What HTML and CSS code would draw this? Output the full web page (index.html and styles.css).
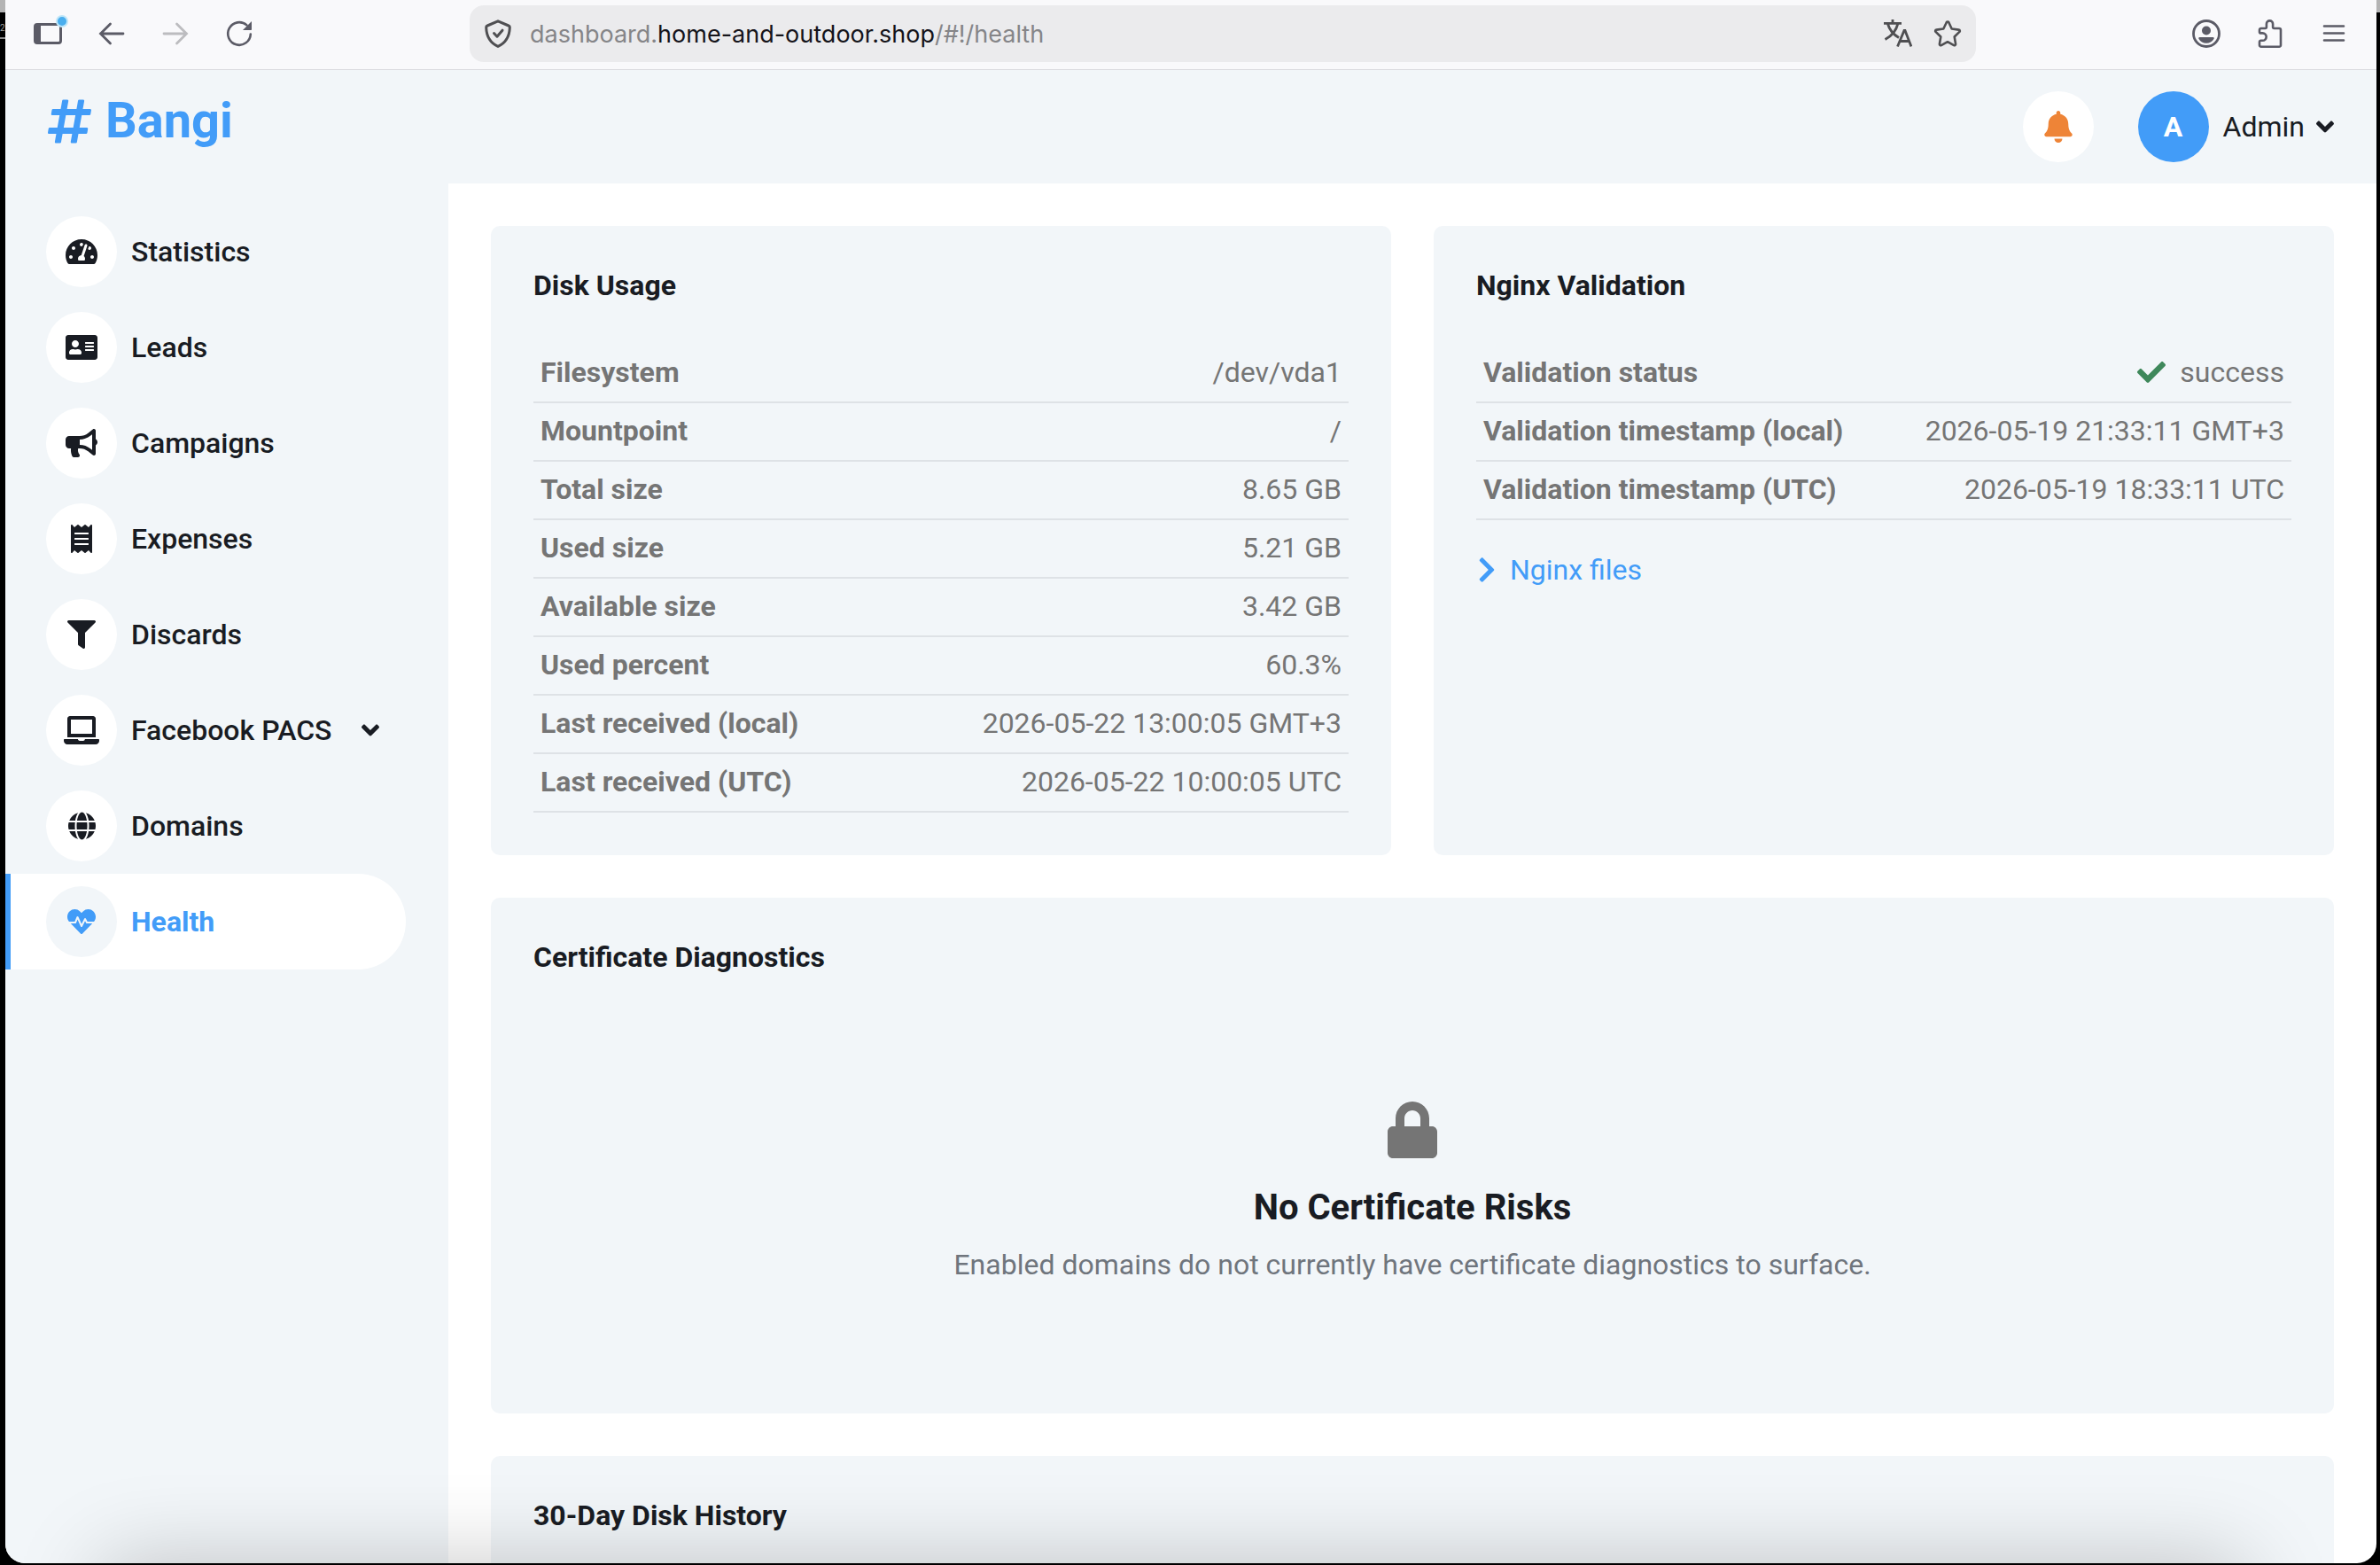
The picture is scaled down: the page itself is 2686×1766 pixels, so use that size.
FILE: index.html
```html
<!DOCTYPE html>
<html lang="en">
<head>
<meta charset="utf-8">
<meta name="viewport" content="width=device-width, initial-scale=1">
<title>Bangi – Health</title>
<link rel="stylesheet" href="styles.css">
</head>
<body>
<div class="desktop">
  <div class="edge"><span class="edge-text" aria-hidden="true">2</span></div>
  <div class="window">
    <div class="toolbar">
      <div class="tools">
        <button class="tool" type="button" aria-label="Sidebar">
          <svg viewBox="0 0 32 32" width="32" height="32"><rect x="1.500" y="5.500" width="29" height="21" rx="2.500" fill="none" stroke="currentColor" stroke-width="3"/><path d="M2 5h6v22H2z" fill="currentColor"/></svg>
          <span class="dot"></span>
        </button>
        <button class="tool" type="button" aria-label="Back">
          <svg viewBox="0 0 32 32" width="32" height="32" fill="none" stroke="currentColor" stroke-width="2.800" stroke-linecap="round"><path d="M14.500 5L3.500 16l11 11M3.500 16H29"/></svg>
        </button>
        <button class="tool tool-off" type="button" aria-label="Forward" disabled>
          <svg viewBox="0 0 32 32" width="32" height="32" fill="none" stroke="currentColor" stroke-width="2.800" stroke-linecap="round"><path d="M17.500 5l11 11-11 11M28.500 16H3"/></svg>
        </button>
        <button class="tool" type="button" aria-label="Reload">
          <svg viewBox="0 0 32 32" width="32" height="32"><path d="M28.800 16.500A12.800 12.800 0 1 1 24.500 6.400" fill="none" stroke="currentColor" stroke-width="2.600" stroke-linecap="round"/><path d="M30 2v9.200a.8.8 0 0 1-.8.8H20z" fill="currentColor"/></svg>
        </button>
      </div>
      <div class="address">
        <svg viewBox="0 0 32 32" width="32" height="32" fill="none" stroke="currentColor" stroke-width="3" stroke-linejoin="round" stroke-linecap="round"><path d="M16 1.800L28 7a2 2 0 0 1 1.300 2C29 19 24.500 26.500 16 30.400 7.500 26.500 3 19 2.700 9A2 2 0 0 1 4 7z"/><path d="M11.500 15.500l3.500 3.700 6-7"/></svg>
        <div class="url" role="textbox" aria-label="Address">dashboard.<span class="host">home-and-outdoor.shop</span>/#!/health</div>
        <button class="tool" type="button" aria-label="Translate">
          <svg viewBox="0 0 32 32" width="32" height="32" fill="none" stroke="currentColor" stroke-width="2.800"><path d="M0 4.400h20M10 0v4.400M16 4.400C14 12.500 8.500 19 1.500 22.500M4.500 5c2 7 6.500 12 12.500 15.500"/><path d="M15.500 30.500L23 12.500h1L31 30.500M18.500 24.500h10"/></svg>
        </button>
        <button class="tool" type="button" aria-label="Bookmark">
          <svg viewBox="0 0 32 32" width="32" height="32" fill="none" stroke="currentColor" stroke-width="2.600" stroke-linejoin="round"><path d="M14.800 3.200a1.400 1.400 0 0 1 2.500 0l3.400 7.300 8 1.100a1.300 1.300 0 0 1 .7 2.300l-5.700 5.600 1.400 8.200a1.400 1.400 0 0 1-2 1.400L16 25.200l-7.100 3.900a1.400 1.400 0 0 1-2-1.400l1.400-8.200-5.700-5.600a1.300 1.300 0 0 1 .7-2.300l8-1.100z"/></svg>
        </button>
      </div>
      <div class="tools">
        <button class="tool" type="button" aria-label="Account">
          <svg viewBox="0 0 32 32" width="32" height="32"><circle cx="16" cy="16" r="14.500" fill="none" stroke="currentColor" stroke-width="2.800"/><circle cx="16" cy="12.500" r="5" fill="currentColor"/><path d="M8.500 20h15a1.200 1.200 0 0 1 1.100 1.800C22.800 25 19.500 26.800 16 26.800S9.200 25 7.400 21.800A1.200 1.200 0 0 1 8.500 20z" fill="currentColor"/></svg>
        </button>
        <button class="tool" type="button" aria-label="Extensions">
          <svg viewBox="0 0 32 32" width="32" height="32" fill="none" stroke="currentColor" stroke-width="2.600" stroke-linejoin="round"><path d="M5.800 10h4.600a1.500 1.500 0 0 0 1.500-1.500V5a3.600 3.600 0 0 1 7.200 0v3.500a1.500 1.500 0 0 0 1.500 1.500h5.600a1.800 1.800 0 0 1 1.800 1.800v17.100a1.800 1.800 0 0 1-1.800 1.800H5.800A1.800 1.800 0 0 1 4 28.900v-3.600a1.500 1.500 0 0 1 1.500-1.500h2a4.200 4.200 0 0 0 0-8.400h-2A1.500 1.500 0 0 1 4 13.900v-2.100A1.800 1.800 0 0 1 5.800 10z"/></svg>
        </button>
        <button class="tool" type="button" aria-label="Menu">
          <svg viewBox="0 0 32 32" width="32" height="32" fill="none" stroke="currentColor" stroke-width="2.600" stroke-linecap="round"><path d="M5 7.500h22M5 15.500h22M5 23.500h22"/></svg>
        </button>
      </div>
    </div>

    <div class="page">
      <aside class="sidebar">
        <a class="brand" href="#!/">
          <svg viewBox="0 0 448 512" width="49" height="56" fill="currentColor"><path d="M440.667 182.109l7.143-40c1.313-7.355-4.342-14.109-11.813-14.109h-74.810l14.623-81.891C377.123 38.754 371.468 32 363.997 32h-40.632a12 12 0 0 0-11.813 9.891L296.175 128H197.540l14.623-81.891C213.477 38.754 207.822 32 200.350 32h-40.632a12 12 0 0 0-11.813 9.891L132.528 128H53.432a12 12 0 0 0-11.813 9.891l-7.143 40C33.163 185.246 38.818 192 46.289 192h74.810L98.242 320H19.146a12 12 0 0 0-11.813 9.891l-7.143 40C-1.123 377.246 4.532 384 12.003 384h74.810L72.190 465.891C70.877 473.246 76.532 480 84.003 480h40.632a12 12 0 0 0 11.813-9.891L151.826 384h98.634l-14.623 81.891C234.523 473.246 240.178 480 247.650 480h40.632a12 12 0 0 0 11.813-9.891L315.472 384h79.096a12 12 0 0 0 11.813-9.891l7.143-40c1.313-7.355-4.342-14.109-11.813-14.109h-74.810l22.857-128h79.096a12 12 0 0 0 11.813-9.891zM261.889 320h-98.634l22.857-128h98.634l-22.857 128z"/></svg>
          <span>Bangi</span>
        </a>
        <nav class="nav">
          <a class="nav-item" href="#!/statistics">
            <span class="nav-icon"><svg viewBox="0 0 576 512" width="36" height="32" fill="currentColor"><path d="M288 32C128.940 32 0 160.940 0 320c0 52.800 14.250 102.260 39.060 144.800 5.610 9.620 16.300 15.200 27.440 15.200h443c11.140 0 21.830-5.580 27.440-15.200C561.750 422.260 576 372.800 576 320c0-159.060-128.940-288-288-288zm0 64c14.710 0 26.580 10.130 30.320 23.650-1.110 2.260-2.640 4.230-3.450 6.670l-9.220 27.670c-5.130 3.490-10.970 6.010-17.640 6.010-17.670 0-32-14.330-32-32S270.330 96 288 96zM96 384c-17.670 0-32-14.330-32-32s14.330-32 32-32 32 14.330 32 32-14.330 32-32 32zm48-160c-17.670 0-32-14.330-32-32s14.330-32 32-32 32 14.330 32 32-14.330 32-32 32zm246.770-72.410l-61.330 184C343.130 347.330 352 364.540 352 384c0 11.720-3.380 22.550-8.880 32H232.880c-5.500-9.450-8.880-20.280-8.880-32 0-33.940 26.500-61.430 59.900-63.590l61.340-184.010c4.170-12.560 17.730-19.450 30.360-15.170 12.570 4.190 19.350 17.790 15.170 30.360zm14.660 57.200l15.520-46.550c3.470-1.290 7.130-2.230 11.050-2.230 17.670 0 32 14.330 32 32s-14.330 32-32 32c-11.380-.010-20.890-6.280-26.570-15.220zM480 384c-17.670 0-32-14.330-32-32s14.330-32 32-32 32 14.330 32 32-14.330 32-32 32z"/></svg></span>
            <span>Statistics</span>
          </a>
          <a class="nav-item" href="#!/leads">
            <span class="nav-icon"><svg viewBox="0 0 576 512" width="36" height="32" fill="currentColor"><path d="M528 32H48C21.500 32 0 53.500 0 80v352c0 26.500 21.500 48 48 48h480c26.500 0 48-21.500 48-48V80c0-26.500-21.500-48-48-48zm-352 96c35.300 0 64 28.700 64 64s-28.700 64-64 64-64-28.700-64-64 28.700-64 64-64zm112 236.800c0 10.600-10 19.200-22.400 19.200H86.400C74 384 64 375.400 64 364.800v-19.200c0-31.800 30.100-57.600 67.200-57.600h5c12.300 5.100 25.700 8 39.800 8s27.600-2.900 39.800-8h5c37.100 0 67.200 25.800 67.200 57.600v19.200zM512 312c0 4.400-3.600 8-8 8H360c-4.400 0-8-3.600-8-8v-16c0-4.400 3.600-8 8-8h144c4.400 0 8 3.600 8 8v16zm0-64c0 4.400-3.600 8-8 8H360c-4.400 0-8-3.600-8-8v-16c0-4.400 3.600-8 8-8h144c4.400 0 8 3.600 8 8v16zm0-64c0 4.400-3.600 8-8 8H360c-4.400 0-8-3.600-8-8v-16c0-4.400 3.600-8 8-8h144c4.400 0 8 3.600 8 8v16z"/></svg></span>
            <span>Leads</span>
          </a>
          <a class="nav-item" href="#!/campaigns">
            <span class="nav-icon"><svg viewBox="0 0 576 512" width="36" height="32" fill="currentColor"><path d="M576 240c0-23.630-12.950-44.040-32-55.120V32.010C544 23.260 537.020 0 512 0c-7.120 0-14.190 2.380-19.980 7.020l-85.030 68.030C364.280 109.190 310.660 128 256 128H64c-35.350 0-64 28.650-64 64v96c0 35.350 28.650 64 64 64h33.700c-1.390 10.480-2.180 21.140-2.180 32 0 39.770 9.260 77.350 25.560 110.940 5.190 10.690 16.520 17.060 28.400 17.060h74.280c26.050 0 41.690-29.840 25.900-50.560-16.400-21.520-26.150-48.360-26.150-77.440 0-11.110 1.620-21.790 4.410-32H256c54.660 0 108.280 18.810 150.980 52.950l85.030 68.030a32.023 32.023 0 0 0 19.980 7.020c24.920 0 32-22.780 32-32V295.130C563.050 284.040 576 263.630 576 240zm-96 141.420l-33.050-26.440C392.950 311.780 325.120 288 256 288v-96c69.120 0 136.950-23.780 190.950-66.980L480 98.580v282.840z"/></svg></span>
            <span>Campaigns</span>
          </a>
          <a class="nav-item" href="#!/expenses">
            <span class="nav-icon"><svg viewBox="0 0 384 512" width="24" height="32" fill="currentColor"><path d="M358.400 3.200L320 48 265.600 3.200a15.900 15.900 0 0 0-19.200 0L192 48 137.600 3.200a15.900 15.900 0 0 0-19.200 0L64 48 25.600 3.200C15-4.700 0 2.800 0 16v480c0 13.200 15 20.700 25.600 12.800L64 464l54.400 44.800a15.900 15.900 0 0 0 19.200 0L192 464l54.400 44.800a15.900 15.900 0 0 0 19.200 0L320 464l38.400 44.800c10.500 7.900 25.600.4 25.600-12.800V16c0-13.200-15-20.700-25.600-12.800zM320 360c0 4.400-3.600 8-8 8H72c-4.400 0-8-3.600-8-8v-16c0-4.400 3.600-8 8-8h240c4.400 0 8 3.600 8 8v16zm0-96c0 4.400-3.600 8-8 8H72c-4.400 0-8-3.600-8-8v-16c0-4.400 3.600-8 8-8h240c4.400 0 8 3.600 8 8v16zm0-96c0 4.400-3.600 8-8 8H72c-4.400 0-8-3.600-8-8v-16c0-4.400 3.600-8 8-8h240c4.400 0 8 3.600 8 8v16z"/></svg></span>
            <span>Expenses</span>
          </a>
          <a class="nav-item" href="#!/discards">
            <span class="nav-icon"><svg viewBox="0 0 512 512" width="32" height="32" fill="currentColor"><path d="M487.976 0H24.028C2.710 0-8.047 25.866 7.058 40.971L192 225.941V432c0 7.831 3.821 15.170 10.237 19.662l80 55.980C298.020 518.690 320 507.493 320 487.980V225.941l184.947-184.970C520.021 25.896 509.338 0 487.976 0z"/></svg></span>
            <span>Discards</span>
          </a>
          <a class="nav-item" href="#!/facebook-pacs" aria-expanded="false">
            <span class="nav-icon"><svg viewBox="0 0 640 512" width="40" height="32" fill="currentColor"><path d="M624 416H381.540c-.740 19.810-14.710 32-32.740 32H288c-18.690 0-33.020-17.470-32.770-32H16c-8.800 0-16 7.200-16 16v16c0 35.200 28.800 64 64 64h512c35.200 0 64-28.800 64-64v-16c0-8.800-7.200-16-16-16zM576 48c0-26.400-21.600-48-48-48H112C85.600 0 64 21.600 64 48v336h512V48zm-64 272H128V64h384v256z"/></svg></span>
            <span>Facebook PACS</span>
            <svg class="nav-caret" viewBox="0 0 320 512" width="20" height="32" fill="currentColor"><path d="M143 352.300L7 216.300c-9.400-9.400-9.400-24.600 0-33.900l22.600-22.600c9.400-9.400 24.600-9.400 33.900 0l96.400 96.400 96.400-96.400c9.400-9.400 24.600-9.400 33.900 0l22.600 22.600c9.400 9.400 9.400 24.600 0 33.900l-136 136c-9.200 9.400-24.400 9.400-33.800 0z"/></svg>
          </a>
          <a class="nav-item" href="#!/domains">
            <span class="nav-icon"><svg viewBox="0 0 496 512" width="31" height="32" fill="currentColor"><path d="M336.500 160C322 70.700 287.800 8 248 8s-74 62.700-88.500 152h177zM152 256c0 22.200 1.200 43.500 3.300 64h185.300c2.100-20.500 3.300-41.800 3.300-64s-1.200-43.500-3.300-64H155.300c-2.100 20.500-3.300 41.800-3.300 64zm324.700-96c-28.600-67.900-86.500-120.400-158-141.600 24.400 33.800 41.200 84.700 50 141.600h108zM177.200 18.400C105.800 39.600 47.800 92.100 19.300 160h108c8.700-56.900 25.500-107.800 49.900-141.600zM487.400 192H372.700c2.100 21 3.300 42.500 3.300 64s-1.200 43-3.300 64h114.600c5.500-20.500 8.600-41.800 8.600-64s-3.100-43.500-8.500-64zM120 256c0-21.500 1.200-43 3.300-64H8.600C3.200 212.500 0 233.800 0 256s3.200 43.500 8.600 64h114.600c-2-21-3.200-42.500-3.200-64zm39.500 96c14.500 89.300 48.700 152 88.500 152s74-62.700 88.500-152h-177zm159.300 141.600c71.400-21.200 129.400-73.700 158-141.600h-108c-8.800 56.900-25.600 107.800-50 141.600zM19.300 352c28.600 67.900 86.500 120.400 158 141.600-24.400-33.800-41.200-84.700-50-141.600h-108z"/></svg></span>
            <span>Domains</span>
          </a>
          <a class="nav-item nav-active" href="#!/health" aria-current="page">
            <span class="nav-icon"><svg viewBox="0 0 512 512" width="32" height="32" fill="currentColor"><path d="M320.200 243.800l-49.700 99.400c-6 12.100-23.400 11.700-28.900-.6l-56.900-126.300-30 71.700H60.600l182.500 186.500c7.100 7.300 18.600 7.300 25.700 0L451.400 288H342.300l-22.100-44.200zM473.700 73.900l-2.400-2.500c-51.500-52.600-135.800-52.600-187.400 0L256 100l-27.900-28.500c-51.500-52.700-135.900-52.700-187.400 0l-2.400 2.400C-10.400 123.700-12.500 203 31 256h102.400l35.900-86.200c5.400-12.900 23.600-13.100 29.300-.4l58.600 130.100 49-97.900c5.900-11.800 22.700-11.800 28.600 0l27.600 55.200H481c43.500-53 41.400-132.300-7.300-182.100z"/></svg></span>
            <span>Health</span>
          </a>
        </nav>
      </aside>

      <div class="content">
        <header class="topbar">
          <button class="bell" type="button" aria-label="Notifications">
            <svg viewBox="0 0 448 512" width="32" height="36" fill="currentColor"><path d="M224 512c35.320 0 63.970-28.650 63.970-64H160.030c0 35.350 28.650 64 63.970 64zm215.390-149.710c-19.320-20.760-55.470-51.990-55.470-154.290 0-77.700-54.480-139.900-127.940-155.160V32c0-17.670-14.320-32-31.980-32s-31.980 14.330-31.980 32v20.840C118.560 68.100 64.080 130.300 64.080 208c0 102.300-36.150 133.530-55.470 154.290-6 6.450-8.660 14.160-8.610 21.710.110 16.400 12.980 32 32.100 32h383.800c19.120 0 32-15.600 32.100-32 .050-7.550-2.610-15.270-8.610-21.710z"/></svg>
          </button>
          <button class="account" type="button" aria-expanded="false">
            <span class="avatar">A</span>
            <span class="account-name">Admin</span>
            <svg viewBox="0 0 320 512" width="20" height="32" fill="currentColor"><path d="M143 352.300L7 216.300c-9.400-9.400-9.400-24.600 0-33.900l22.600-22.600c9.400-9.400 24.600-9.400 33.900 0l96.400 96.400 96.400-96.400c9.400-9.400 24.600-9.400 33.900 0l22.600 22.600c9.400 9.400 9.400 24.600 0 33.900l-136 136c-9.200 9.400-24.400 9.400-33.800 0z"/></svg>
          </button>
        </header>

        <main class="main">
          <section class="card">
            <h6 class="card-title">Disk Usage</h6>
            <table class="facts">
              <tbody>
                <tr><th scope="row">Filesystem</th><td>/dev/vda1</td></tr>
                <tr><th scope="row">Mountpoint</th><td>/</td></tr>
                <tr><th scope="row">Total size</th><td>8.65 GB</td></tr>
                <tr><th scope="row">Used size</th><td>5.21 GB</td></tr>
                <tr><th scope="row">Available size</th><td>3.42 GB</td></tr>
                <tr><th scope="row">Used percent</th><td>60.3%</td></tr>
                <tr><th scope="row">Last received (local)</th><td>2026-05-22 13:00:05 GMT+3</td></tr>
                <tr><th scope="row">Last received (UTC)</th><td>2026-05-22 10:00:05 UTC</td></tr>
              </tbody>
            </table>
          </section>

          <section class="card">
            <h6 class="card-title">Nginx Validation</h6>
            <table class="facts">
              <tbody>
                <tr><th scope="row">Validation status</th><td><span class="status"><svg viewBox="0 0 512 512" width="32" height="32" fill="currentColor"><path d="M173.898 439.404l-166.400-166.400c-9.997-9.997-9.997-26.206 0-36.204l36.203-36.204c9.997-9.998 26.207-9.998 36.204 0L192 312.690 432.095 72.596c9.997-9.997 26.207-9.997 36.204 0l36.203 36.204c9.997 9.997 9.997 26.206 0 36.204l-294.400 294.401c-9.998 9.997-26.207 9.997-36.204-.001z"/></svg>success</span></td></tr>
                <tr><th scope="row">Validation timestamp (local)</th><td>2026-05-19 21:33:11 GMT+3</td></tr>
                <tr><th scope="row">Validation timestamp (UTC)</th><td>2026-05-19 18:33:11 UTC</td></tr>
              </tbody>
            </table>
            <a class="more" href="#!/health/nginx">
              <svg viewBox="0 0 320 512" width="24" height="32" fill="currentColor"><path d="M285.476 272.971L91.132 467.314c-9.373 9.373-24.569 9.373-33.941 0l-22.667-22.667c-9.357-9.357-9.375-24.522-.040-33.901L188.505 256 34.484 101.255c-9.335-9.379-9.317-24.544.040-33.901l22.667-22.667c9.373-9.373 24.569-9.373 33.941 0L285.475 239.030c9.373 9.372 9.373 24.568.001 33.941z"/></svg>
              <span>Nginx files</span>
            </a>
          </section>

          <section class="card card-wide">
            <h6 class="card-title">Certificate Diagnostics</h6>
            <div class="empty">
              <svg viewBox="0 0 448 512" width="56" height="64" fill="currentColor"><path d="M400 224h-24v-72C376 68.200 307.800 0 224 0S72 68.200 72 152v72H48c-26.500 0-48 21.500-48 48v192c0 26.500 21.500 48 48 48h352c26.500 0 48-21.500 48-48V272c0-26.500-21.500-48-48-48zm-104 0H152v-72c0-39.700 32.300-72 72-72s72 32.300 72 72v72z"/></svg>
              <h5 class="empty-title">No Certificate Risks</h5>
              <p class="empty-text">Enabled domains do not currently have certificate diagnostics to surface.</p>
            </div>
          </section>

          <section class="card card-wide">
            <h6 class="card-title">30-Day Disk History</h6>
          </section>
        </main>
      </div>
    </div>
    <div class="dock-shadow"></div>
  </div>
  <div class="edge"></div>
</div>
</body>
</html>
```

FILE: styles.css
```css
:root {
  --blue: #429cf8;
  --dark: #191c23;
  --muted: #757575;
  --light: #f2f6f9;
  --line: #dee2e6;
}

* {
  box-sizing: border-box;
}

body {
  margin: 0;
  background: #000;
  color: var(--muted);
  font-family: Roboto, "Open Sans", sans-serif;
  font-size: 32px;
  line-height: 48px;
}

h5,
h6,
p {
  margin: 0;
}

a {
  color: inherit;
  text-decoration: none;
}

button {
  margin: 0;
  padding: 0;
  border: 0;
  background: none;
  color: inherit;
  font: inherit;
}

svg {
  display: block;
  flex: none;
}

/* Browser window on the desktop */
.desktop {
  display: grid;
  grid-template-columns: 6px minmax(0, 1fr) 4px;
  height: 100vh;
  padding-bottom: 2px;
  overflow: hidden;
}

.edge {
  padding-top: 20px;
  background: linear-gradient(#b4b4b4 14px, #000 14px);
}

.edge-text {
  display: block;
  height: 24px;
  border-bottom: 2px solid #8a8a8a;
  color: #a0a0a0;
  font-size: 10px;
  line-height: 24px;
}

.window {
  position: relative;
  display: flex;
  flex-direction: column;
  min-height: 0;
  overflow: hidden;
  border-radius: 0 0 22px 22px;
  background: #fff;
}

/* Toolbar */
.toolbar {
  display: flex;
  flex: none;
  align-items: center;
  height: 79px;
  padding: 0 32px 2px;
  border-bottom: 1px solid #dcdce0;
  background: #f9f9fb;
  color: #5b5b66;
}

.tools {
  display: flex;
  gap: 40px;
}

.tool {
  position: relative;
  width: 32px;
  height: 32px;
}

.tool-off {
  color: #bcbcbf;
}

.dot {
  position: absolute;
  top: -5px;
  right: -7px;
  width: 14px;
  height: 14px;
  border: 2px solid #bfe6f8;
  border-radius: 50%;
  background: #4aaeee;
}

.address {
  display: flex;
  flex: 1;
  align-items: center;
  gap: 24px;
  height: 64px;
  min-width: 0;
  margin: 0 244px;
  padding: 0 16px;
  border-radius: 16px;
  background: #ebebed;
  color: #4f4f52;
}

.url {
  flex: 1;
  margin-left: -4px;
  padding-top: 2px;
  overflow: hidden;
  color: #858588;
  font-family: Inter, "Liberation Sans", sans-serif;
  font-size: 27px;
  white-space: nowrap;
}

.host {
  color: #15141a;
}

/* Sidebar */
.page {
  display: flex;
  flex: 1;
  min-height: 0;
  overflow: hidden;
}

.sidebar {
  flex: none;
  width: 500px;
  padding: 24px 42px 0 0;
  background: var(--light);
  color: var(--dark);
}

.brand {
  display: flex;
  align-items: center;
  gap: 16px;
  margin: 0 0 60px 48px;
  color: var(--blue);
  font-size: 56px;
  font-weight: 700;
  line-height: 67px;
}

.nav {
  display: flex;
  flex-direction: column;
  margin-right: 6px;
}

.nav-item {
  display: flex;
  align-items: center;
  gap: 16px;
  padding: 14px 30px 14px 40px;
  border-left: 6px solid transparent;
  border-radius: 0 54px 54px 0;
  font-weight: 500;
}

.nav-icon {
  display: flex;
  flex: none;
  align-items: center;
  justify-content: center;
  width: 80px;
  height: 80px;
  border-radius: 50%;
  background: #fff;
}

.nav-caret {
  margin-left: auto;
}

.nav-active {
  border-color: var(--blue);
  background: #fff;
  color: var(--blue);
  font-weight: 700;
}

.nav-active .nav-icon {
  background: var(--light);
}

/* Top bar */
.content {
  flex: 1;
  min-width: 0;
}

.topbar {
  display: flex;
  justify-content: flex-end;
  gap: 50px;
  padding: 24px 48px;
  background: var(--light);
  color: var(--dark);
}

.bell,
.avatar {
  display: flex;
  align-items: center;
  justify-content: center;
  width: 80px;
  height: 80px;
  border-radius: 50%;
}

.bell {
  background: #fff;
  color: #ee8437;
}

.avatar {
  background: var(--blue);
  color: #fff;
  font-weight: 700;
}

.account {
  display: flex;
  align-items: center;
}

.account-name {
  margin: 0 13px 0 16px;
}

/* Cards */
.main {
  display: grid;
  grid-template-columns: repeat(2, minmax(0, 1fr));
  gap: 48px;
  padding: 48px;
}

.card {
  padding: 48px;
  border-radius: 10px;
  background: var(--light);
}

.card-wide {
  grid-column: 1 / -1;
}

.card-title {
  margin-bottom: 48px;
  color: var(--dark);
  font-size: 32px;
  font-weight: 700;
  line-height: 38px;
}

.facts {
  width: 100%;
  border-spacing: 0;
}

.facts th,
.facts td {
  padding: 7px 8px 9px;
  border-bottom: 2px solid var(--line);
}

.facts th {
  font-weight: 700;
  text-align: left;
}

.facts td {
  text-align: right;
}

.status {
  display: flex;
  align-items: center;
  justify-content: flex-end;
  gap: 16px;
}

.status svg {
  color: #3f885b;
}

.more {
  display: inline-flex;
  align-items: center;
  gap: 14px;
  margin-top: 32px;
  color: var(--blue);
}

.empty {
  display: flex;
  flex-direction: column;
  align-items: center;
  padding: 96px 0;
  text-align: center;
}

.empty-title {
  margin: 32px 0 16px;
  color: var(--dark);
  font-size: 40px;
  font-weight: 700;
  line-height: 48px;
}

.empty-text {
  color: #6f757d;
}

/* Shadow that the dock casts over the window's lower edge */
.dock-shadow {
  position: absolute;
  top: 100%;
  right: 150px;
  left: 110px;
  height: 120px;
  box-shadow: 0 0 100px rgba(0, 0, 0, 0.22);
  pointer-events: none;
}
```
